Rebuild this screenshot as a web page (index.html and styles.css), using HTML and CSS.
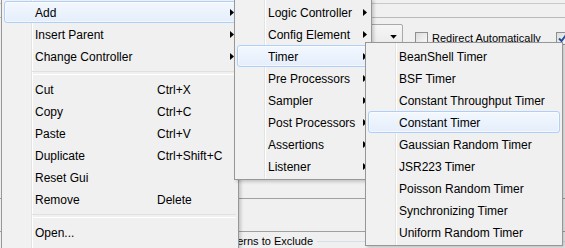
FILE: index.html
```html
<!DOCTYPE html>
<html lang="en">
<head>
<meta charset="UTF-8" />
<title>Add Timer menu</title>
<link rel="stylesheet" href="styles.css">
</head>
<body>

<!-- window behind the popup -->
<div class="app">
    <div class="strip"></div>

    <div class="options">
        <div class="combo"><span class="combo-arrow"></span></div>
        <span class="check"></span>
        <span class="check-label">Redirect Automatically</span>
        <span class="check checked">
            <svg width="11" height="11" viewBox="0 0 11 11"><path d="M2 5.5L4.5 8L9.5 1.5" fill="none" stroke="#2a4d9b" stroke-width="2"/></svg>
        </span>
    </div>

    <div class="table-box"></div>

    <div class="legend-row">
        <span class="legend">URL Patterns to Exclude</span>
        <span class="legend-line"></span>
    </div>
</div>

<!-- popup menu -->
<div class="menu menu-main">
    <div class="item active"><span class="label">Add</span><span class="arrow"></span></div>
    <div class="item"><span class="label">Insert Parent</span><span class="arrow"></span></div>
    <div class="item"><span class="label">Change Controller</span><span class="arrow"></span></div>
    <div class="sep"></div>
    <div class="item"><span class="label">Cut</span><span class="key">Ctrl+X</span></div>
    <div class="item"><span class="label">Copy</span><span class="key">Ctrl+C</span></div>
    <div class="item"><span class="label">Paste</span><span class="key">Ctrl+V</span></div>
    <div class="item"><span class="label">Duplicate</span><span class="key">Ctrl+Shift+C</span></div>
    <div class="item"><span class="label">Reset Gui</span></div>
    <div class="item"><span class="label">Remove</span><span class="key">Delete</span></div>
    <div class="sep"></div>
    <div class="item"><span class="label">Open...</span></div>
</div>

<!-- Add submenu -->
<div class="menu menu-add">
    <div class="item"><span class="label">Logic Controller</span><span class="arrow"></span></div>
    <div class="item"><span class="label">Config Element</span><span class="arrow"></span></div>
    <div class="item active"><span class="label">Timer</span><span class="arrow"></span></div>
    <div class="item"><span class="label">Pre Processors</span><span class="arrow"></span></div>
    <div class="item"><span class="label">Sampler</span><span class="arrow"></span></div>
    <div class="item"><span class="label">Post Processors</span><span class="arrow"></span></div>
    <div class="item"><span class="label">Assertions</span><span class="arrow"></span></div>
    <div class="item"><span class="label">Listener</span><span class="arrow"></span></div>
</div>

<!-- Timer submenu -->
<div class="menu menu-timer">
    <div class="item"><span class="label">BeanShell Timer</span></div>
    <div class="item"><span class="label">BSF Timer</span></div>
    <div class="item"><span class="label">Constant Throughput Timer</span></div>
    <div class="item active"><span class="label">Constant Timer</span></div>
    <div class="item"><span class="label">Gaussian Random Timer</span></div>
    <div class="item"><span class="label">JSR223 Timer</span></div>
    <div class="item"><span class="label">Poisson Random Timer</span></div>
    <div class="item"><span class="label">Synchronizing Timer</span></div>
    <div class="item"><span class="label">Uniform Random Timer</span></div>
</div>

</body>
</html>
```

FILE: styles.css
```css
*{
    margin:0;
    padding:0;
    box-sizing:border-box;
}

body{
    position:relative;
    width:565px;
    height:248px;
    overflow:hidden;
    background:#f0f0f0;
    font-family:"Liberation Sans",Arial,sans-serif;
    color:#000;
}

/* ---------- window behind ---------- */

.app{
    height:248px;
    display:flex;
    flex-direction:column;
    font-size:11px;
}

.strip{
    margin-top:3px;
    height:16px;
    border-top:1px solid #c9c9c9;
    border-bottom:1px solid #b9b9b9;
}

.options{
    display:flex;
    align-items:flex-start;
    margin-top:6px;
    padding-left:299px;
    white-space:nowrap;
}

.options > *{
    flex-shrink:0;
}

.combo{
    width:104px;
    height:26px;
    border:1px solid #a9a9a9;
    border-radius:2px;
    background:linear-gradient(#f6f6f6,#e8e8e8);
    display:flex;
    align-items:center;
    justify-content:flex-end;
    padding-right:5px;
}

.combo-arrow{
    width:7px;
    height:4px;
    background:#000;
    clip-path:polygon(0 0,100% 0,50% 100%);
}

.check{
    display:block;
    width:13px;
    height:13px;
    margin-top:8px;
    margin-left:12px;
    border:1px solid #8e8f8f;
    background:linear-gradient(135deg,#dcdcdc,#fbfbfb);
}

.check svg{
    display:block;
}

.check-label{
    margin-left:4px;
    margin-top:8px;
    line-height:12px;
}

.check.checked{
    margin-left:15px;
}

.table-box{
    margin-top:148px;
    height:37px;
    border-top:1px solid #a0a0a0;
    border-bottom:1px solid #a0a0a0;
}

.legend-row{
    display:flex;
    align-items:center;
    margin-top:3px;
    padding-left:193px;
    line-height:13px;
    white-space:nowrap;
}

.legend-line{
    flex:1;
    margin-left:4px;
    border-top:1px solid #d5dfe5;
}

/* ---------- popup menus ---------- */

.menu{
    position:absolute;
    padding:2px;
    border:1px solid #979797;
    background:linear-gradient(to right,#f1f1f1 0 29px,#e2e3e3 29px 30px,#fff 30px 31px,#f0f0f0 31px);
    font-size:12px;
    box-shadow:2px 2px 3px rgba(0,0,0,0.18);
}

.menu-main{
    left:1px;
    top:-2px;
    width:238px;
    padding-bottom:12px;
}

.menu-add{
    left:234px;
    top:-2px;
    width:138px;
}

.menu-timer{
    left:365px;
    top:42px;
    width:198px;
}

.item{
    display:flex;
    align-items:center;
    height:22px;
    padding:1px 1px 0 30px;
    border:1px solid transparent;
    border-radius:3px;
    white-space:nowrap;
}

.item.active{
    border-color:#aecff7;
    background:linear-gradient(#f3f8fe,#e4eefb);
    box-shadow:inset 0 0 0 1px rgba(255,255,255,0.55);
}

.menu-main .label{
    width:122px;
}

.arrow{
    margin-left:auto;
    width:4px;
    height:7px;
    background:#000;
    clip-path:polygon(0 0,100% 50%,0 100%);
}

.sep{
    height:11px;
    padding-top:4px;
}

.sep::before{
    content:"";
    display:block;
    height:2px;
    margin-left:28px;
    border-top:1px solid #e0e0e0;
    border-bottom:1px solid #fff;
}
```
